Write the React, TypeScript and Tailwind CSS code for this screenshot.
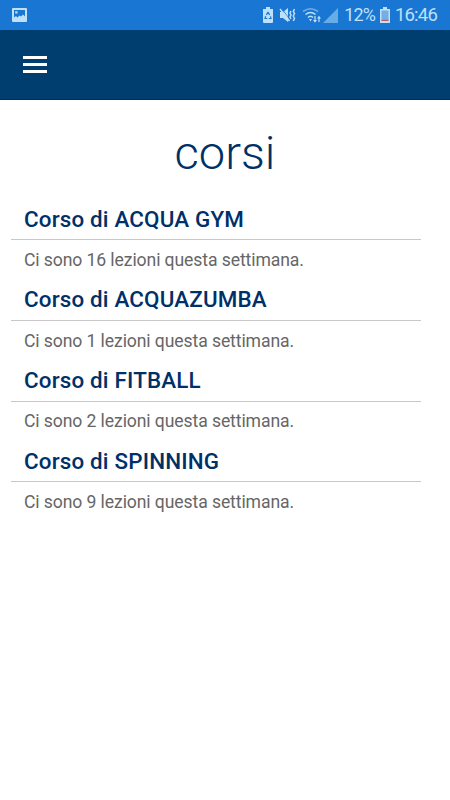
import React from 'react';

interface Course {
  name: string;
  lessons: number;
}

const courses: Course[] = [
  { name: 'ACQUA GYM', lessons: 16 },
  { name: 'ACQUAZUMBA', lessons: 1 },
  { name: 'FITBALL', lessons: 2 },
  { name: 'SPINNING', lessons: 9 },
];

const StatusBar: React.FC = () => (
  <div className="flex h-[30px] items-center justify-between bg-[#1976d2] pr-[13px] pl-3 text-[#bfe0f8]">
    <svg className="h-[14px] w-[15px]" viewBox="0 0 15 14" fill="currentColor">
      <path
        fillRule="evenodd"
        d="M1 0h13a1 1 0 0 1 1 1v12a1 1 0 0 1-1 1H1a1 1 0 0 1-1-1V1a1 1 0 0 1 1-1zM2 2v7.500l2-1.500 1.500 1.500 2-2 1.500 1 2-2 2 2V2zM3.200 3.200h2.300v2.300H3.200z"
      />
    </svg>
    <div className="flex items-center">
      {/* Battery saver */}
      <svg className="mr-[6px] h-4 w-[10px]" viewBox="0 0 10 16" fill="currentColor">
        <path d="M3 0h4v2h3v13a1 1 0 0 1-1 1H1a1 1 0 0 1-1-1V2h3z" />
        <path d="M3.300 7.800L5 5.300l1.700 2.500M7.500 9.300L8 11.500H5.800M4.300 11.500H2l.7-2.400" fill="none" stroke="#1976d2" strokeWidth="1.2" />
      </svg>
      {/* Sound off, vibrate */}
      <svg className="mr-[6px] h-4 w-[17px]" viewBox="0 0 17 16" fill="none" stroke="currentColor" strokeWidth="1.5">
        <path d="M1 5h3l5-4v14l-5-4H1z" fill="currentColor" stroke="none" />
        <path d="M2.500 1.500l8.500 11" stroke="#1976d2" strokeWidth="0.8" />
        <path d="M1 2l9.500 12M12 4l-1 2 1 2-1 2 1 2M15.500 2l-1.200 2.500 1.200 2-1.200 2.500 1.200 2.500-1.200 2.500" />
      </svg>
      {/* Wi-Fi with traffic arrows */}
      <svg className="mr-px h-4 w-[20px]" viewBox="0 0 20 16" fill="none" stroke="currentColor" strokeWidth="1.6">
        <path d="M1 4.500Q8.500-1 16 4.500" opacity=".5" />
        <path d="M3.500 7.500q5-4 10 0M6 10.500q2.500-2.500 5 0" />
        <path d="M7 12h3L8.500 14.500z" fill="currentColor" stroke="none" />
        <path d="M13 9v5M17 15v-5" strokeWidth="1.2" />
        <path d="M11 13h4l-2 2.700zM15 11.500h4l-2-2.700z" fill="currentColor" stroke="none" />
      </svg>
      <svg className="mr-[6px] h-[15px] w-[15px]" viewBox="0 0 15 15" fill="#66ace6">
        <path d="M15 0v15H0z" />
      </svg>
      <span className="text-[18px] leading-none tracking-[-0.9px]">12%</span>
      {/* Battery, nearly empty */}
      <svg className="mr-[5px] ml-[5px] h-4 w-[10px]" viewBox="0 0 10 16" fill="none">
        <path d="M3 0h4v2h3v14H0V2h3z" fill="#bfe0f8" />
        <path d="M1.500 3.500h7v9h-7z" fill="#75ade4" />
        <path d="M1.500 12.500h7V14h-7z" fill="#b65d68" />
      </svg>
      <span className="text-[18.500px] leading-none tracking-[-0.8px]">16:46</span>
    </div>
  </div>
);

const CourseItem: React.FC<{ course: Course }> = ({ course }) => (
  <section className="h-[80.7px]">
    <h2 className="ml-[13px] h-[40.4px] pt-[6.600px] text-[22.400px] leading-[26px] font-medium tracking-[0.17px] whitespace-nowrap text-[#003068]">
      Corso di {course.name}
    </h2>
    <p className="border-t border-[#c8c8c8] pt-[9.500px] pl-[13px] text-[17.600px] leading-5 tracking-[-0.1px] whitespace-nowrap text-[#666]">
      Ci sono {course.lessons} lezioni questa settimana.
    </p>
  </section>
);

export default function App() {
  return (
    <div className="h-[800px] w-[450px] overflow-hidden bg-white font-['Roboto',sans-serif]">
      <StatusBar />
      <header className="flex h-[70px] items-center border-b border-[#002c58] bg-[#003e6f] pb-px pl-[23px]">
        <button aria-label="Menu" className="flex w-6 flex-col gap-[4px]">
          <span className="h-[3px] bg-white" />
          <span className="h-[3px] bg-white" />
          <span className="h-[3px] bg-white" />
        </button>
      </header>
      <main className="pr-[29px] pl-[11px]">
        <h1 className="ml-[18px] h-[99px] pt-[25px] text-center text-[47px] leading-[56px] font-light text-[#003068]">corsi</h1>
        {courses.map((course) => (
          <CourseItem key={course.name} course={course} />
        ))}
      </main>
    </div>
  );
}
